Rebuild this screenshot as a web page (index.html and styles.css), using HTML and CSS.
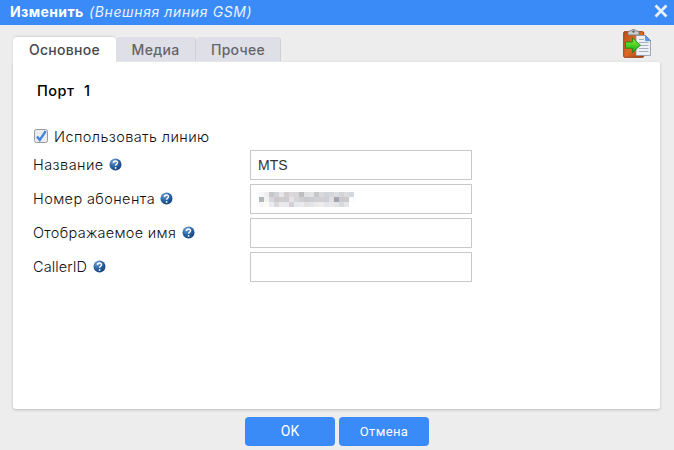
FILE: index.html
```html
<!DOCTYPE html>
<html lang="ru">
<head>
<meta charset="utf-8">
<title>Изменить</title>
<link rel="stylesheet" href="styles.css">
</head>
<body>
<svg class="defs" width="0" height="0">
  <defs>
    <radialGradient id="blue" cx=".35" cy=".25" r=".8"><stop offset="0" stop-color="#79a9d8"/><stop offset=".5" stop-color="#2c68a9"/><stop offset="1" stop-color="#123f79"/></radialGradient>
    <linearGradient id="green" x1="0" y1="0" x2="0" y2="1"><stop offset="0" stop-color="#8df43c"/><stop offset="1" stop-color="#10a80d"/></linearGradient>
    <linearGradient id="board" x1="0" y1="0" x2="1" y2="1"><stop offset="0" stop-color="#b9501b"/><stop offset=".5" stop-color="#de6a25"/><stop offset="1" stop-color="#a53c0c"/></linearGradient>
    <symbol id="help" viewBox="0 0 13 13"><circle cx="6.5" cy="6.5" r="6" fill="url(#blue)"/><path d="M4.5 5C4.6 2.4 8.7 2.5 8.5 4.8C8.4 6.2 6.6 6.3 6.6 7.8" fill="none" stroke="#fff" stroke-width="1.5"/><circle cx="6.6" cy="9.9" r=".9" fill="#fff"/></symbol>
  </defs>
</svg>
<header class="titlebar">
  <div class="title"><b>Изменить</b><i>(Внешняя линия GSM)</i></div>
  <svg class="close" width="14" height="14" viewBox="0 0 14 14"><path d="M1.5 1.5L12.5 12.5M12.5 1.5L1.5 12.5" stroke="#e7f1ff" stroke-width="2.8"/></svg>
</header>
<div class="toolbar">
  <nav class="tabs">
    <div class="tab active">Основное</div>
    <div class="tab second">Медиа</div>
    <div class="tab third">Прочее</div>
  </nav>
  <svg class="paste" width="30" height="30" viewBox="0 0 30 30">
    <rect x=".7" y="2.7" width="20" height="25.6" rx="1" fill="url(#board)" stroke="#973c12"/>
    <path d="M5 6V3.5Q5 2 7 2h1Q8 .5 10.5.5T13 2h1q2 0 2 1.5V6z" fill="#c9cdd0" stroke="#70787c" stroke-width=".8"/>
    <circle cx="10.5" cy="2.6" r="1.2" fill="#5d5b59"/>
    <path d="M13 6.5h9.5l5 5v15H13z" fill="#edf1f6" stroke="#8796aa" stroke-width=".8"/>
    <path d="M22.5 6.5v5.2h5z" fill="#5a9ce9" stroke="#427bc0" stroke-width=".6"/>
    <path d="M16 10.5h5M16 13.5h9.5M16 16.5h9.5M16 19.5h9.5M16 22.5h9.5" stroke="#a5b0bc" stroke-width="1.1"/>
    <path d="M2.5 13h7V9l8 7.2-8 7.3v-4.3h-7z" fill="url(#green)" stroke="#158211" stroke-width=".8"/>
  </svg>
</div>
<main class="panel">
  <h1><span class="port">Порт</span><span>1</span></h1>
  <div class="check">
    <svg width="16" height="16" viewBox="0 0 16 16"><rect x="1.5" y="1.5" width="13" height="13" rx="2" fill="#ececef" stroke="#969aa1"/><path d="M4 8.4L6.8 12L12.7 3.2" fill="none" stroke="#4383e0" stroke-width="2.4"/></svg>
    <span class="use">Использовать линию</span>
  </div>
  <div class="row"><div class="label"><span class="l1">Название</span><svg width="13" height="13"><use href="#help"/></svg></div><div class="field">MTS</div></div>
  <div class="row"><div class="label"><span class="l2">Номер абонента</span><svg width="13" height="13"><use href="#help"/></svg></div><div class="field">
    <svg class="mosaic" width="95" height="15" viewBox="0 0 19 3" shape-rendering="crispEdges">
      <g id="mosaic"></g>
    </svg></div></div>
  <div class="row"><div class="label"><span class="l3">Отображаемое имя</span><svg width="13" height="13"><use href="#help"/></svg></div><div class="field"></div></div>
  <div class="row"><div class="label"><span class="l4">CallerID</span><svg width="13" height="13"><use href="#help"/></svg></div><div class="field"></div></div>
</main>
<footer><div class="button ok">OK</div><div class="button">Отмена</div></footer>
<script src="mosaic.js"></script>
</body>
</html>
```
FILE: styles.css
```css
* { box-sizing: border-box; }
body { margin: 0; width: 674px; height: 450px; overflow: hidden; background: #ededed; font-family: Inter, "Open Sans", sans-serif; display: flex; flex-direction: column; }
.defs { position: absolute; }
.titlebar { flex: none; height: 25px; background: #3a8af8; color: #fff; display: flex; justify-content: space-between; padding: 0 6px 0 10px; }
.title { display: flex; gap: 4px; font-size: 14px; line-height: 24px; white-space: nowrap; }
.title b { width: 75px; letter-spacing: .4px; }
.title i { letter-spacing: .62px; color: #e9f3ff; }
.close { margin-top: 4px; }
.toolbar { flex: none; height: 37px; padding: 0 10px 0 13px; display: flex; justify-content: space-between; position: relative; z-index: 1; }
.tabs { display: flex; padding-top: 12px; height: 37px; }
.tab { height: 24px; line-height: 26px; background: #dfdfe8; color: #64646a; font-size: 14px; font-weight: 550; letter-spacing: .3px; text-align: center; border-right: 1px solid #cfcfd5; border-radius: 4px 4px 0 0; white-space: nowrap; }
.active { width: 103px; height: 25px; background: #fff; color: #48484b; border: 0; box-shadow: 0 -1px 2px #d5d5d5; }
.second { width: 80px; }
.third { width: 85px; }
.paste { margin-top: 4px; margin-right: 11px; }
.panel { flex: none; width: 647px; height: 347px; margin-left: 13px; background: #fff; padding: 18px 20px 0; border-radius: 0 2px 3px 3px; box-shadow: 0 1px 3px #bcbcbc; }
h1 { display: flex; gap: 9px; height: 22px; margin: 0; padding-left: 4px; font-size: 14.5px; line-height: 22px; font-weight: 550; }
.port { width: 38px; letter-spacing: .5px; }
.check { display: flex; align-items: center; height: 22px; margin: 23px 0 3px; gap: 5px; font-size: 14.5px; font-weight: 300; color: #111; }
.row { display: flex; height: 30px; margin-bottom: 4px; }
.label { width: 217px; display: flex; align-items: center; gap: 5px; font-size: 14.5px; font-weight: 300; color: #111; height: 29px; white-space: nowrap; }
.use, .l2 { letter-spacing: .4px; }
.l1 { width: 71px; letter-spacing: .45px; }
.l2 { width: 122px; }
.l3 { width: 144px; letter-spacing: .3px; }
.l4 { width: 55px; letter-spacing: .1px; }
.field { width: 222px; height: 30px; border: 1px solid #c8c8c8; padding-left: 7px; font: 14px/29px "Liberation Sans", sans-serif; color: #333; }
.mosaic { display: block; margin: 7px 0 0 1px; }
footer { display: flex; justify-content: center; gap: 4px; padding-top: 8px; }
.button { width: 90px; height: 29px; border-radius: 4px; background: #3a8af8; color: #fff; text-align: center; font: 450 13px/29px Roboto, sans-serif; letter-spacing: .35px; }
.ok { font-size: 14px; letter-spacing: 0; }
```
FILE: mosaic.js
```js
// Pixelated number: one grey level per cell.
const rows = [
  ["f6f6f6","eeeeee","c5c6ca","d2d3d6","e6e6e8","d2cdd1","dcd7da","d7d7da","bdbdc0","dddfe1","e3e3e5","c6c8ca","dadadd","d0d3d8","d4d6da","dadde1","d6d1d4","dadce0","d5d9df"],
  ["b1b6b8","f2f2f2","d8d8dc","c9c8cc","d2cccf","cdccd2","e7e2e4","d3d7dc","d1ced1","cacacd","cccdd2","cfd1d5","d0d1d5","cdd0d6","e2dddf","a3a3ad","cbc9ce","cdcacc","f8fcff"],
  ["f5f6f7","fcf9f6","e9edf2","dcd8da","eceaed","e7e9ee","d4cfd3","e5e8ed","e8eaee","e4e1e3","e4e5e9","ece9ea","f0edec","e2e5eb","e9e7e9","e1e4e9","d8dae0","e7e5e6","ffffff"]
];
const group = document.getElementById("mosaic");
rows.forEach((row, y) => row.forEach((color, x) => {
  const cell = document.createElementNS("http://www.w3.org/2000/svg", "rect");
  cell.setAttribute("x", x);
  cell.setAttribute("y", y);
  cell.setAttribute("width", 1);
  cell.setAttribute("height", 1);
  cell.setAttribute("fill", "#" + color);
  group.appendChild(cell);
}));
```
